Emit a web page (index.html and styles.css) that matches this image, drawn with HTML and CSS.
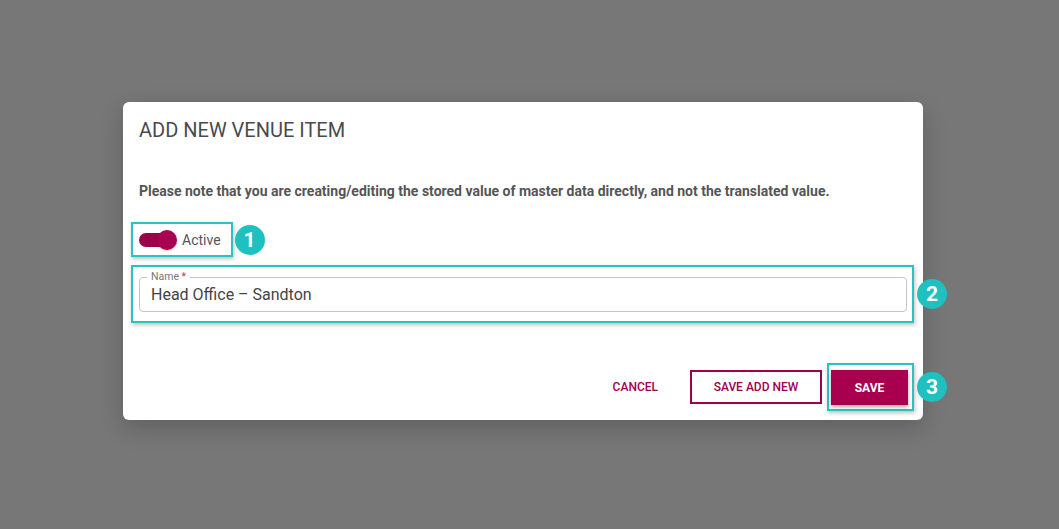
FILE: index.html
```html
<!DOCTYPE html>
<html lang="en">
<head>
<meta charset="utf-8">
<title>Add New Venue Item</title>
<link rel="stylesheet" href="styles.css">
</head>
<body>
<div class="backdrop">
  <div class="dialog">
    <h2 class="dialog-title">ADD NEW VENUE ITEM</h2>
    <p class="note">Please note that you are creating/editing the stored value of master data directly, and not the translated value.</p>

    <div class="hl hl-toggle">
      <label class="toggle">
        <span class="track"><span class="thumb"></span></span>
        <span class="toggle-label">Active</span>
      </label>
      <span class="badge">1</span>
    </div>

    <div class="hl hl-field">
      <div class="field">
        <span class="field-label">Name <span class="req">*</span></span>
        <span class="field-value">Head Office – Sandton</span>
      </div>
      <span class="badge">2</span>
    </div>

    <div class="actions">
      <button class="btn btn-text">CANCEL</button>
      <button class="btn btn-outline">SAVE ADD NEW</button>
      <div class="hl hl-save">
        <button class="btn btn-fill">SAVE</button>
        <span class="badge">3</span>
      </div>
    </div>
  </div>
</div>
</body>
</html>
```

FILE: styles.css
```css
* { box-sizing: border-box; }

html, body {
  margin: 0;
  padding: 0;
}

body {
  background: #777777;
  font-family: Roboto, "Liberation Sans", Arial, sans-serif;
  width: 1059px;
  height: 529px;
  overflow: hidden;
}

.backdrop {
  padding: 102px 0 0 123px;
}

.dialog {
  width: 800px;
  height: 318px;
  background: #ffffff;
  border-radius: 6px;
  padding: 16px 16px 0 16px;
  display: flex;
  flex-direction: column;
  box-shadow: 0 8px 24px rgba(0,0,0,0.2);
}

.dialog-title {
  margin: 0;
  font-size: 20px;
  line-height: 24px;
  font-weight: 400;
  color: #4a4a4a;
}

.note {
  margin: 39px 0 0 0;
  font-size: 14px;
  line-height: 20px;
  font-weight: 700;
  color: #555555;
}

/* annotation highlight boxes */
.hl {
  position: relative;
  border: 2px solid #2cc2c2;
  box-shadow: 1px 2px 4px rgba(0,0,0,0.25);
}

.badge {
  position: absolute;
  top: 50%;
  left: 100%;
  margin-left: 4px;
  transform: translateY(-50%);
  width: 30px;
  height: 30px;
  border-radius: 50%;
  background: #1fc0c0;
  color: #ffffff;
  font-size: 21px;
  font-weight: 700;
  line-height: 30px;
  text-align: center;
}

.hl-toggle {
  align-self: flex-start;
  margin: 21px 0 0 -8px;
  padding: 5px 10px 5px 6px;
}

.toggle {
  display: flex;
  align-items: center;
  gap: 7px;
  height: 21px;
}

.track {
  position: relative;
  width: 36px;
  height: 14px;
  border-radius: 7px;
  background: #9c004b;
}

.thumb {
  position: absolute;
  right: -2px;
  top: -3px;
  width: 20px;
  height: 20px;
  border-radius: 50%;
  background: #aa0052;
  box-shadow: 0 1px 2px rgba(0,0,0,0.25);
}

.toggle-label {
  font-size: 14px;
  color: #555555;
}

.hl-field {
  margin: 8px -7px 0 -8px;
  padding: 10px 5px 9px 6px;
}

.hl-field .badge { margin-left: 5px; }

.field {
  position: relative;
  height: 35px;
  border: 1px solid #c4c4c4;
  border-radius: 4px;
  display: flex;
  align-items: center;
  padding-left: 11px;
}

.field-label {
  position: absolute;
  left: 7px;
  top: -7px;
  padding: 0 4px;
  background: #ffffff;
  font-size: 10.5px;
  line-height: 12px;
  color: #777777;
}

.req { color: #d32f2f; }

.field-value {
  font-size: 16px;
  color: #444444;
}

.actions {
  margin-top: auto;
  margin-right: -7px;
  margin-bottom: 9px;
  display: flex;
  justify-content: flex-end;
  align-items: center;
}

.btn {
  font-family: Roboto, "Liberation Sans", Arial, sans-serif;
  font-size: 12px;
  font-weight: 500;
  cursor: pointer;
  height: 34px;
  border-radius: 0;
}

.btn-text {
  background: transparent;
  border: none;
  color: #a0004e;
  padding: 0 16px;
  margin-right: 16px;
}

.btn-outline {
  background: #ffffff;
  border: 2px solid #9c004b;
  color: #a0004e;
  width: 132px;
  margin-right: 5px;
}

.hl-save {
  padding: 5px 4px 4px 2px;
}

.hl-save .badge { margin-left: 5px; }

.btn-fill {
  display: block;
  width: 77px;
  height: 35px;
  background: #a8004f;
  color: #ffffff;
  border: none;
  font-weight: 700;
  box-shadow: 0 2px 4px rgba(0,0,0,0.35);
}
```
